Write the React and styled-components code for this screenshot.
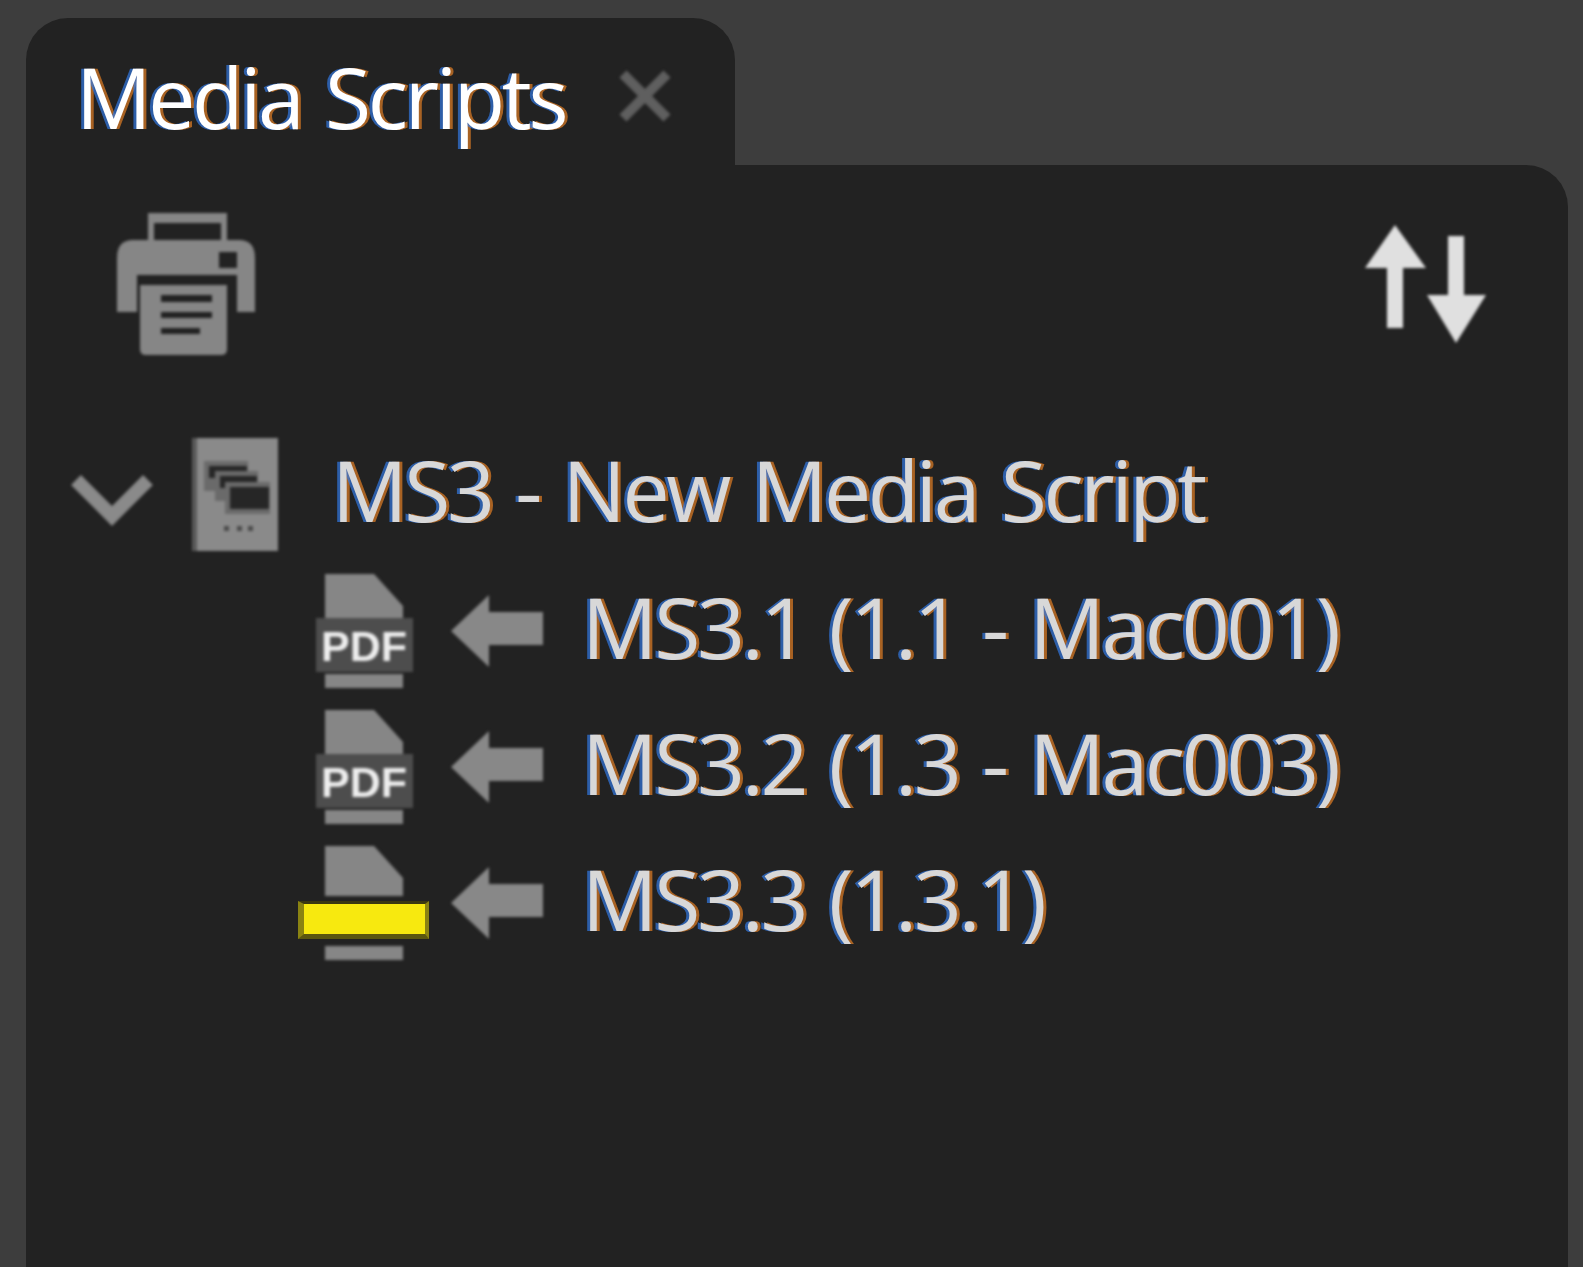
import React from 'react';
import styled, { createGlobalStyle } from 'styled-components';

const GlobalStyle = createGlobalStyle`
    html, body {
        margin: 0;
        background: #3d3d3d;
    }
`;

const Page = styled.div`
    box-sizing: border-box;
    height: 1267px;
    padding: 18px 15px 0 26px;
    display: flex;
    flex-direction: column;
    overflow: hidden;
`;

const TabStrip = styled.div`
    display: flex;
    height: 147px;
    flex: none;
`;

const Tab = styled.div`
    width: 709px;
    box-sizing: border-box;
    padding: 29px 0 0 50px;
    display: flex;
    align-items: flex-start;
    background: #222222;
    border-radius: 42px 42px 0 0;
`;

const Label = styled.div`
    font-family: 'Open Sans', 'Noto Sans', sans-serif;
    font-size: 84px;
    letter-spacing: -3.3px;
    word-spacing: 5px;
    line-height: 1.2;
    padding-bottom: 8px;
    white-space: nowrap;
    color: ${(props) => props.color || '#d8d8d8'};
    text-shadow: -3px 0 rgba(50, 120, 225, 0.7), 3px 0 rgba(225, 125, 35, 0.7);
`;

const Panel = styled.div`
    flex: 1;
    background: #222222;
    border-radius: 0 42px 0 0;
    padding: 48px 82px 0 44px;
`;

const Toolbar = styled.div`
    display: flex;
    align-items: flex-start;
    justify-content: space-between;
    height: 213px;
    padding-left: 47px;
`;

const SortWrap = styled.div`
    padding-top: 12px;
`;

const Row = styled.div`
    display: flex;
    align-items: center;
    height: ${(props) => props.height || 136}px;
    padding-left: ${(props) => props.indent || 0}px;
`;

const Icon = styled.svg`
    display: block;
    flex: none;
    filter: blur(1.4px);
    margin-right: ${(props) => props.gap || 0}px;
`;

const CloseIcon = styled(Icon)`
    margin: 22px 0 0 53px;
`;

const ChevronIcon = styled(Icon)`
    margin-top: 10px;
`;

const SideSlot = styled.div`
    position: relative;
    width: 92px;
    height: 114px;
    margin-right: 43px;
    flex: none;
`;

const Highlight = styled.div`
    position: absolute;
    left: -18px;
    top: 55px;
    width: 131px;
    height: 38px;
    box-sizing: border-box;
    background: #f7e90f;
    border-style: solid;
    border-width: 3px 4px 5px 6px;
    border-color: #3a3812 #8a8312 #5b5710 #8a8312;
`;

const Close = () => (
    <CloseIcon width="54" height="54" viewBox="0 0 54 54">
        <path d="M5 5 L49 49 M49 5 L5 49" stroke="#5f5f5f" strokeWidth="10" />
    </CloseIcon>
);

const Printer = () => (
    <Icon width="139" height="142" viewBox="0 0 139 142">
        <path d="M31 0h79v27h-6V10H37v17h-6z" fill="#868686" />
        <path
            fillRule="evenodd"
            d="M16 27h106q16 0 16 18v54h-18V62H20v37H0V45q0-18 16-18zM102 39h18v16h-18z"
            fill="#868686"
        />
        <path
            fillRule="evenodd"
            d="M23 72h87v64q0 6-6 6H29q-6 0-6-6zM44 82h51v7H44zM44 99h51v6H44zM44 115h39v6H44z"
            fill="#868686"
        />
    </Icon>
);

const SortArrows = () => (
    <Icon width="121" height="118" viewBox="0 0 121 118">
        <path d="M30 0L61 43H38V103H22V43H0z" fill="#e0e0e0" />
        <path d="M83 11h16v59h22L91 118L62 70h21z" fill="#e0e0e0" />
    </Icon>
);

const Chevron = () => (
    <ChevronIcon width="84" height="52" viewBox="0 0 84 52" gap={38}>
        <path d="M6 6L42 42L78 6" fill="none" stroke="#8a8a8a" strokeWidth="14" />
    </ChevronIcon>
);

const ScriptDoc = () => (
    <Icon width="86" height="113" viewBox="0 0 86 113" gap={54}>
        <rect width="86" height="113" fill="#8a8a8a" />
        <rect width="5" height="113" fill="#5a5a5a" />
        <rect x="12" y="23" width="44" height="30" fill="#6a6a6a" />
        <rect x="17" y="28" width="38" height="12" fill="#262626" />
        <rect x="23" y="33" width="43" height="30" fill="#6a6a6a" />
        <rect x="28" y="38" width="37" height="12" fill="#262626" />
        <rect x="33" y="44" width="45" height="32" fill="#6a6a6a" />
        <rect x="38" y="49" width="39" height="22" fill="#262626" />
        <rect x="32" y="88" width="5" height="5" fill="#4a4a4a" />
        <rect x="45" y="88" width="5" height="5" fill="#4a4a4a" />
        <rect x="56" y="88" width="5" height="5" fill="#4a4a4a" />
    </Icon>
);

const PageShape = () => (
    <>
        <path d="M9 0H58L87 32V50H9z" fill="#868686" />
        <rect x="9" y="100" width="78" height="14" fill="#868686" />
    </>
);

const PdfIcon = () => (
    <SideSlot>
        <Icon width="97" height="114" viewBox="0 0 97 114">
            <PageShape />
            <rect y="44" width="97" height="54" fill="#4d4d4d" />
            <text
                x="48"
                y="87"
                textAnchor="middle"
                fontFamily="'Liberation Sans', sans-serif"
                fontWeight="700"
                fontSize="43"
                fill="#eeeeee"
            >
                PDF
            </text>
        </Icon>
    </SideSlot>
);

const MarkedIcon = () => (
    <SideSlot>
        <Icon width="97" height="114" viewBox="0 0 97 114">
            <PageShape />
        </Icon>
        <Highlight />
    </SideSlot>
);

const BackArrow = () => (
    <Icon width="92" height="72" viewBox="0 0 92 72" gap={39}>
        <path d="M0 36L38 0V17H92V50H38V72z" fill="#888888" />
    </Icon>
);

const children = [
    { id: 1, title: 'MS3.1 (1.1 - Mac001)', icon: <PdfIcon /> },
    { id: 2, title: 'MS3.2 (1.3 - Mac003)', icon: <PdfIcon /> },
    { id: 3, title: 'MS3.3 (1.3.1)', icon: <MarkedIcon /> },
];

export default function App() {
    return (
        <Page>
            <GlobalStyle />
            <TabStrip>
                <Tab>
                    <Label color="#ffffff">Media Scripts</Label>
                    <Close />
                </Tab>
            </TabStrip>
            <Panel>
                <Toolbar>
                    <Printer />
                    <SortWrap>
                        <SortArrows />
                    </SortWrap>
                </Toolbar>
                <Row height={137}>
                    <Chevron />
                    <ScriptDoc />
                    <Label>MS3 - New Media Script</Label>
                </Row>
                {children.map((item) => (
                    <Row key={item.id} indent={246}>
                        {item.icon}
                        <BackArrow />
                        <Label>{item.title}</Label>
                    </Row>
                ))}
            </Panel>
        </Page>
    );
}
